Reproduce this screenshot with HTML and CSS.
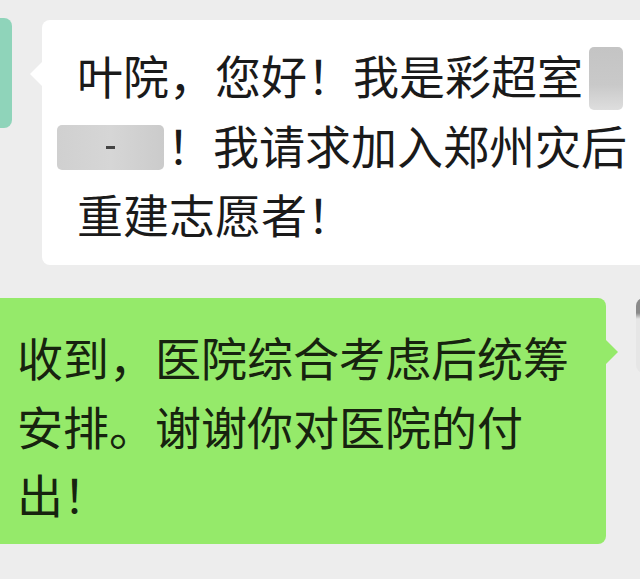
FILE: index.html
```html
<!DOCTYPE html>
<html lang="zh-CN">
<head>
    <meta charset="UTF-8">
    <title>聊天记录</title>
    <link rel="stylesheet" href="styles.css">
</head>
<body>
    <div class="chat">
        <div class="msg msg-left">
            <div class="avatar avatar-left"></div>
            <div class="bubble bubble-white">
                叶院，您好！我是彩超室<span class="mask mask-a"></span><br>
                <span class="mask mask-b"><span class="dash"></span></span>！我请求加入郑州灾后<br>
                重建志愿者！
            </div>
        </div>

        <div class="msg msg-right">
            <div class="bubble bubble-green">
                收到，医院综合考虑后统筹<br>
                安排。谢谢你对医院的付<br>
                出！
            </div>
            <div class="avatar avatar-right"></div>
        </div>
    </div>
</body>
</html>
```

FILE: styles.css
```css
html, body {
    margin: 0;
    padding: 0;
    overflow: hidden;
}
body {
    background-color: #ededed;
    font-family: "Noto Sans CJK SC", "Noto Sans", sans-serif;
    color: #1a1a1a;
    width: 640px;
    height: 579px;
}
.chat {
    display: flex;
    flex-direction: column;
    gap: 33px;
    padding-top: 18px;
}
.msg {
    display: flex;
    align-items: flex-start;
}
.msg-right {
    justify-content: flex-end;
}
.avatar {
    width: 80px;
    height: 110px;
    border-radius: 8px;
    flex-shrink: 0;
}
.avatar-left {
    margin-left: -68px;
    background-color: #8fd4ba;
}
.avatar-right {
    margin-right: -76px;
    margin-left: 30px;
    height: 75px;
    background: linear-gradient(to bottom, #8a8a8a 0, #8a8a8a 20%, #e6e6e6 28%);
}
.bubble {
    position: relative;
    font-size: 46px;
    line-height: 68.5px;
    white-space: nowrap;
    border-radius: 8px;
}
.bubble-white {
    background-color: #fff;
    margin-left: 30px;
    margin-right: -40px;
    margin-top: 2px;
    padding: 20px 60px 18px 35px;
    flex: 1;
}
.bubble-white::before {
    content: "";
    position: absolute;
    left: -12px;
    top: 42px;
    border-top: 12px solid transparent;
    border-bottom: 12px solid transparent;
    border-right: 12px solid #fff;
}
.bubble-green {
    background-color: #95ea6a;
    color: #17230f;
    margin-left: -20px;
    padding: 24px 36px 16px 37px;
    width: 553px;
}
.bubble-green::after {
    content: "";
    position: absolute;
    right: -12px;
    top: 42px;
    border-top: 12px solid transparent;
    border-bottom: 12px solid transparent;
    border-left: 12px solid #95ea6a;
}
.mask {
    display: inline-block;
    background: linear-gradient(to bottom, #c4c4c4 0, #c9c9c9 60%, #dedede 100%);
    border-radius: 5px;
    position: relative;
}
.mask-a {
    width: 34px;
    height: 63px;
    margin-left: 6px;
    vertical-align: -16px;
}
.mask-b {
    width: 107px;
    height: 45px;
    margin-left: -20px;
    margin-right: 3px;
    vertical-align: -6px;
    background: linear-gradient(to right, #d0d0d0 0, #d6d6d6 50%, #cbcbcb 100%);
}
.dash {
    position: absolute;
    left: 49px;
    top: 21px;
    width: 9px;
    height: 3px;
    background-color: #444;
}
```
